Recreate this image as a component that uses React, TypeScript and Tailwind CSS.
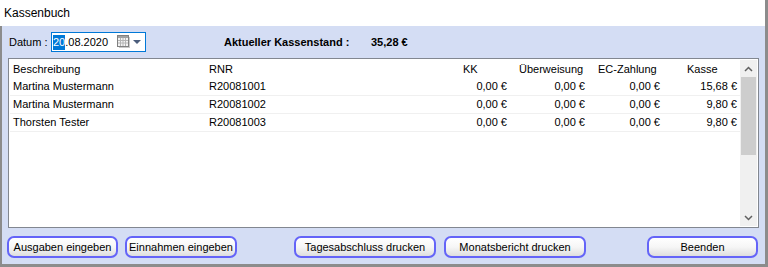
import React from 'react';

type Row = {
  name: string;
  rnr: string;
  kk: string;
  ueb: string;
  ec: string;
  kasse: string;
};

const rows: Row[] = [
  { name: 'Martina Mustermann', rnr: 'R20081001', kk: '0,00 €', ueb: '0,00 €', ec: '0,00 €', kasse: '15,68 €' },
  { name: 'Martina Mustermann', rnr: 'R20081002', kk: '0,00 €', ueb: '0,00 €', ec: '0,00 €', kasse: '9,80 €' },
  { name: 'Thorsten Tester', rnr: 'R20081003', kk: '0,00 €', ueb: '0,00 €', ec: '0,00 €', kasse: '9,80 €' },
];

const cols = 'grid grid-cols-[195px_215px_90px_78px_75px_77px]';

const CalendarIcon: React.FC = () => (
  <svg width="14" height="14" viewBox="0 0 14 14">
    <rect x="2" y="2" width="11" height="11" fill="#c9c9c9" />
    <rect x="0.5" y="0.5" width="11" height="11" fill="#f3f3f3" stroke="#808080" />
    <rect x="1" y="1" width="10" height="2" fill="#a0a0a0" />
    <path d="M3.5 3v8M6 3v8M8.5 3v8M1 5.5h10M1 8h10" stroke="#b4b4b4" strokeWidth="1" />
  </svg>
);

const Chevron: React.FC<{ up?: boolean }> = ({ up }) => (
  <svg width="9" height="6" viewBox="0 0 9 6">
    <path d={up ? 'M1 5 L4.5 1.5 L8 5' : 'M1 1 L4.5 4.5 L8 1'} fill="none" stroke="#606060" strokeWidth="1.5" />
  </svg>
);

const WinButton: React.FC<{ label: string; className?: string }> = ({ label, className }) => (
  <button
    className={
      'h-[22px] whitespace-nowrap rounded-[7px] border-2 border-[#6464f8] bg-gradient-to-b from-white via-[#f6f6f6] to-[#dedede] text-[11px] font-normal text-black leading-none ' +
      (className ?? '')
    }
  >
    {label}
  </button>
);

const App: React.FC = () => {
  return (
    <div className="w-[768px] h-[267px] bg-white flex flex-col font-['Liberation_Sans',Arial,sans-serif] text-[11px] text-black">
      <div className="h-[26px] shrink-0 flex items-center pl-[4px] border-r-[3px] border-[#8c8c8c] text-[12px]">
        Kassenbuch
      </div>

      <div className="flex-1 flex flex-col bg-[#d4ddf4] border-l-2 border-r-[3px] border-b-[3px] border-[#8c8c8c]">
        <div className="h-[32px] shrink-0 flex items-center pl-[7px]">
          <span className="w-[42px]">Datum :</span>
          <div className="w-[95px] h-[20px] bg-white border border-[#0078d7] flex items-center pl-[1px] pr-[4px]">
            <span className="bg-[#0078d7] text-white leading-[15px]">20</span>
            <span className="leading-[15px]">.08.2020</span>
            <div className="ml-auto flex items-center gap-[2px]">
              <CalendarIcon />
              <svg width="8" height="4" viewBox="0 0 8 4">
                <polygon points="0,0 8,0 4,4" fill="#4b5d7c" />
              </svg>
            </div>
          </div>
          <span className="ml-[78px] w-[147px] font-bold">Aktueller Kassenstand :</span>
          <span className="font-bold">35,28 €</span>
        </div>

        <div className="mx-[6px] h-[170px] shrink-0 bg-white border border-[#828790] p-[1px] flex">
          <div className="flex-1 flex flex-col">
            <div className={cols + ' h-[18px] items-center'}>
              <span className="pl-[3px]">Beschreibung</span>
              <span className="pl-[4px]">RNR</span>
              <span className="pl-[43px]">KK</span>
              <span className="pl-[9px]">Überweisung</span>
              <span className="pl-[10px]">EC-Zahlung</span>
              <span className="pl-[24px]">Kasse</span>
            </div>
            {rows.map((r) => (
              <div key={r.rnr} className={cols + ' h-[18px] items-center border-b border-[#f0f0f0]'}>
                <span className="pl-[3px]">{r.name}</span>
                <span className="pl-[4px]">{r.rnr}</span>
                <span className="text-right pr-[3px]">{r.kk}</span>
                <span className="text-right pr-[3px]">{r.ueb}</span>
                <span className="text-right pr-[3px]">{r.ec}</span>
                <span className="text-right pr-[3px]">{r.kasse}</span>
              </div>
            ))}
          </div>
          <div className="w-[17px] bg-[#f0f0f0] flex flex-col">
            <div className="h-[17px] flex items-center justify-center">
              <Chevron up />
            </div>
            <div className="h-[78px] mx-[1px] bg-[#cdcdcd]" />
            <div className="flex-1" />
            <div className="h-[17px] flex items-center justify-center">
              <Chevron />
            </div>
          </div>
        </div>

        <div className="mt-[8px] flex pl-[5px]">
          <WinButton label="Ausgaben eingeben" className="w-[111px]" />
          <WinButton label="Einnahmen eingeben" className="w-[112px] ml-[7px]" />
          <WinButton label="Tagesabschluss drucken" className="w-[142px] ml-[57px]" />
          <WinButton label="Monatsbericht drucken" className="w-[142px] ml-[8px]" />
          <WinButton label="Beenden" className="w-[111px] ml-[61px]" />
        </div>
      </div>
    </div>
  );
};

export default App;
